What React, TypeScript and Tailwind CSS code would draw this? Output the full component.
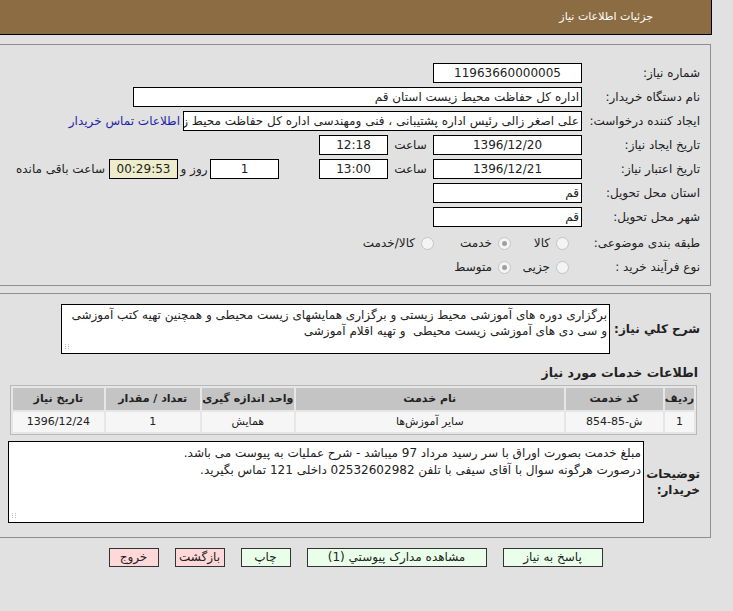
import type { ReactNode } from "react";

function Label({ children }: { children: ReactNode }) {
  return <div className="w-[128px] shrink-0 pr-[10px] text-right">{children}</div>;
}

function Radio({ checked }: { checked?: boolean }) {
  return (
    <span className="flex h-[13px] w-[13px] shrink-0 items-center justify-center rounded-full border border-[#c4c4c4] bg-[#f4f4f4]">
      {checked && <span className="h-[5px] w-[5px] rounded-full bg-[#a0a0a0]" />}
    </span>
  );
}

function Grip() {
  return (
    <svg className="absolute bottom-[3px] left-[3px]" width="6" height="6" viewBox="0 0 6 6">
      <rect x="0" y="0" width="1" height="1" fill="#bbb" />
      <rect x="3" y="0" width="1" height="1" fill="#bbb" />
      <rect x="0" y="2" width="1" height="1" fill="#bbb" />
      <rect x="3" y="2" width="1" height="1" fill="#bbb" />
      <rect x="0" y="4" width="1" height="1" fill="#bbb" />
      <rect x="3" y="4" width="1" height="1" fill="#bbb" />
    </svg>
  );
}

export default function App() {
  return (
    <div
      dir="rtl"
      className="h-[611px] w-[733px] overflow-hidden bg-[#e1e1e1] font-['DejaVu_Sans',Tahoma,sans-serif] text-[12px] text-[#222]"
    >
      <div className="mr-auto w-[712px]">
        {/* header */}
        <div className="flex h-[35px] w-[712px] items-center border-r border-b border-black bg-[#8c6c42] pr-[58px] text-[11px] text-white">
          جزئیات اطلاعات نیاز
        </div>

        {/* main info panel */}
        <div className="mt-[9px] mr-auto w-[711px] border-t border-r border-b border-[#8e8e8e] pt-[16px] pb-[6px]">
          <div className="flex h-[24px] items-center">
            <Label>شماره نیاز:</Label>
            <div className="h-[20px] w-[149px] border border-black bg-white text-center leading-[18px]">
              11963660000005
            </div>
          </div>

          <div className="flex h-[24px] items-center">
            <Label>نام دستگاه خریدار:</Label>
            <div className="h-[20px] w-[449px] border border-black bg-white pr-[2px] leading-[18px]">
              اداره کل حفاظت محیط زیست استان قم
            </div>
          </div>

          <div className="flex h-[24px] items-center">
            <Label>ایجاد کننده درخواست:</Label>
            <div className="h-[20px] w-[399px] overflow-hidden whitespace-nowrap border border-black bg-white pr-[2px] leading-[18px]">
              علی اصغر زالی رئیس اداره پشتیبانی ، فنی ومهندسی اداره کل حفاظت محیط زیست استان قم
            </div>
            <span className="mr-[3px] whitespace-nowrap text-[#1f1fa8]">اطلاعات تماس خریدار</span>
          </div>

          <div className="flex h-[24px] items-center">
            <Label>تاریخ ایجاد نیاز:</Label>
            <div className="h-[20px] w-[149px] border border-black bg-white text-center leading-[18px]">
              1396/12/20
            </div>
            <div className="w-[45px] text-center">ساعت</div>
            <div className="h-[20px] w-[69px] border border-black bg-white text-center leading-[18px]">
              12:18
            </div>
          </div>

          <div className="flex h-[24px] items-center">
            <Label>تاریخ اعتبار نیاز:</Label>
            <div className="h-[20px] w-[149px] border border-black bg-white text-center leading-[18px]">
              1396/12/21
            </div>
            <div className="w-[45px] text-center">ساعت</div>
            <div className="h-[20px] w-[69px] border border-black bg-white text-center leading-[18px]">
              13:00
            </div>
            <div className="w-[40px]" />
            <div className="h-[20px] w-[69px] border border-black bg-white text-center leading-[18px]">
              1
            </div>
            <div className="w-[32px] text-center">روز و</div>
            <div className="h-[20px] w-[69px] border border-black bg-[#eeeccb] text-center leading-[18px]">
              00:29:53
            </div>
            <span className="mr-[4px] whitespace-nowrap">ساعت باقی مانده</span>
          </div>

          <div className="flex h-[24px] items-center">
            <Label>استان محل تحویل:</Label>
            <div className="h-[20px] w-[149px] border border-black bg-white pr-[2px] leading-[18px]">قم</div>
          </div>

          <div className="flex h-[24px] items-center">
            <Label>شهر محل تحویل:</Label>
            <div className="h-[20px] w-[149px] border border-black bg-white pr-[2px] leading-[18px]">قم</div>
          </div>

          <div className="mt-[2px] flex h-[24px] items-center">
            <Label>طبقه بندی موضوعی:</Label>
            <div className="mr-[13px] flex w-[58px] items-center gap-[6px]">
              <Radio />
              <span>کالا</span>
            </div>
            <div className="flex w-[77px] items-center gap-[6px]">
              <Radio checked />
              <span>خدمت</span>
            </div>
            <div className="flex items-center gap-[6px]">
              <Radio />
              <span>کالا/خدمت</span>
            </div>
          </div>

          <div className="flex h-[24px] items-center">
            <Label>نوع فرآیند خرید :</Label>
            <div className="mr-[13px] flex w-[58px] items-center gap-[6px]">
              <Radio />
              <span>جزیی</span>
            </div>
            <div className="flex items-center gap-[6px]">
              <Radio checked />
              <span>متوسط</span>
            </div>
          </div>
        </div>

        {/* description panel */}
        <div className="mt-[7px] mr-auto w-[711px] border-t border-r border-b border-[#8e8e8e] pt-[10px] pb-[14px]">
          <div className="flex items-center">
            <div className="w-[100px] shrink-0 pr-[10px] font-bold">شرح کلي نیاز:</div>
            <div className="relative h-[50px] w-[549px] border border-black bg-white pr-[2px] pt-[2px] leading-[16px]">
              برگزاری دوره های آموزشی محیط زیستی و برگزاری همایشهای زیست محیطی و همچنین تهیه کتب آموزشی و سی دی های آموزشی زیست محیطی&nbsp; و تهیه اقلام آموزشی
              <Grip />
            </div>
          </div>

          <div className="mt-[10px] pr-[12px] text-[12.5px] font-bold">اطلاعات خدمات مورد نیاز</div>

          <div className="mt-[2px] pr-[13px]">
            <table className="w-[687px] border-separate border-spacing-[2px] border border-[#b8b8b8] bg-[#e6e6e6] text-center text-[11px]">
              <thead>
                <tr className="h-[22px] bg-[#c4c4c4] font-bold">
                  <th className="w-[27px]">ردیف</th>
                  <th className="w-[97px]">کد خدمت</th>
                  <th className="w-[268px]">نام خدمت</th>
                  <th className="w-[92px]">واحد اندازه گیری</th>
                  <th className="w-[94px]">تعداد / مقدار</th>
                  <th>تاریخ نیاز</th>
                </tr>
              </thead>
              <tbody>
                <tr className="h-[20px] bg-[#f6f6f6]">
                  <td>1</td>
                  <td>ش-85-854</td>
                  <td>سایر آموزش‌ها</td>
                  <td>همایش</td>
                  <td>1</td>
                  <td>1396/12/24</td>
                </tr>
              </tbody>
            </table>
          </div>

          <div className="mt-[6px] flex items-center">
            <div className="w-[66px] shrink-0 pr-[10px] font-bold leading-[16px]">
              توضیحات
              <br />
              خریدار:
            </div>
            <div className="relative h-[82px] w-[636px] border border-black bg-white pr-[2px] pt-[3px] leading-[17px]">
              مبلغ خدمت بصورت اوراق با سر رسید مرداد 97 میباشد - شرح عملیات به پیوست می باشد.
              <br />
              درصورت هرگونه سوال با آقای سیفی با تلفن 02532602982 داخلی 121 تماس بگیرید.
              <Grip />
            </div>
          </div>
        </div>

        {/* buttons */}
        <div className="mt-[10px] mr-auto flex w-[711px] justify-center gap-[16px]">
          <div className="h-[19px] w-[100px] border border-[#333] bg-[#eaffea] text-center leading-[17px]">پاسخ به نیاز</div>
          <div className="h-[19px] w-[180px] border border-[#333] bg-[#eaffea] text-center leading-[17px]">مشاهده مدارک پیوستي (1)</div>
          <div className="h-[19px] w-[50px] border border-[#333] bg-[#eaffea] text-center leading-[17px]">چاپ</div>
          <div className="h-[19px] w-[50px] whitespace-nowrap border border-[#333] bg-[#ffd9d9] text-center leading-[17px]">بازگشت</div>
          <div className="h-[19px] w-[50px] border border-[#333] bg-[#ffd9d9] text-center leading-[17px]">خروج</div>
        </div>
      </div>
    </div>
  );
}
